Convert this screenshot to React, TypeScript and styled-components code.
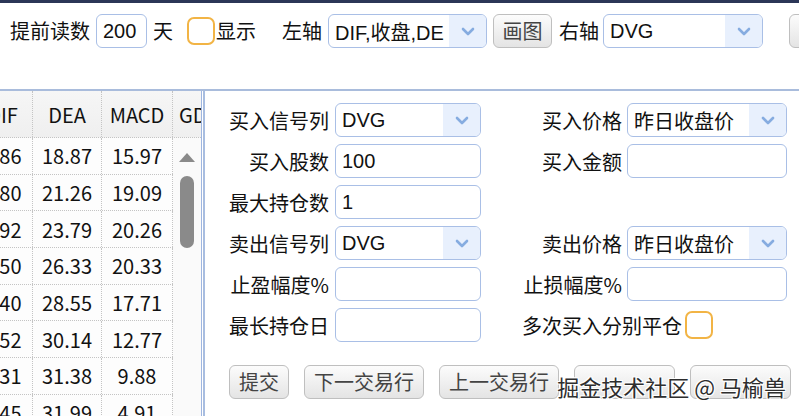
import React from 'react';
import styled, { createGlobalStyle } from 'styled-components';

const Global = createGlobalStyle`
  html, body { margin: 0; padding: 0; background: #fff; }
  body {
    font-family: "Liberation Sans", "Noto Sans CJK SC", sans-serif;
    font-size: 20px;
    color: #111;
    overflow: hidden;
  }
  * { box-sizing: border-box; }
`;

const Page = styled.div`
  position: relative;
  width: 799px;
  height: 416px;
  overflow: hidden;
  display: flex;
  flex-direction: column;
  border-top: 3px solid #2b3657;
  background: #fff;
`;

const Toolbar = styled.div`
  flex-shrink: 0;
  height: 88px;
  padding: 11px 0 0 10px;
  border-bottom: 2px solid #a9bcdc;
  overflow: hidden;
`;

const ToolRow = styled.div`
  height: 34px;
  display: flex;
  align-items: center;
  white-space: nowrap;
`;

const Text = styled.span<{ $ml?: number }>`
  display: flex;
  align-items: center;
  height: 34px;
  margin-left: ${(p) => p.$ml ?? 0}px;
  font-family: "Noto Sans CJK SC", sans-serif;
  font-size: 20px;
  line-height: 1;
  flex-shrink: 0;
`;

const TextInput = styled.div<{ $w?: number; $ml?: number }>`
  flex-shrink: 0;
  width: ${(p) => (p.$w ? `${p.$w}px` : '100%')};
  margin-left: ${(p) => p.$ml ?? 0}px;
  height: 34px;
  border: 1px solid #a9bfe6;
  border-radius: 6px;
  background: #fff;
  padding: 0 6px;
  display: flex;
  align-items: center;
  font-family: "Liberation Sans", "Noto Sans CJK SC", sans-serif;
  font-size: 20px;
  color: #111;
  overflow: hidden;
  white-space: nowrap;
`;

const SelectBox = styled.div<{ $w?: number; $ml?: number }>`
  flex-shrink: 0;
  width: ${(p) => (p.$w ? `${p.$w}px` : '100%')};
  margin-left: ${(p) => p.$ml ?? 0}px;
  height: 34px;
  border: 1px solid #a9bfe6;
  border-radius: 6px;
  background: #fff;
  display: flex;
  overflow: hidden;
`;

const SelectValue = styled.div`
  flex: 1;
  min-width: 0;
  padding: 0 6px;
  display: flex;
  align-items: center;
  font-family: "Liberation Sans", "Noto Sans CJK SC", sans-serif;
  font-size: 20px;
  color: #111;
  overflow: hidden;
  white-space: nowrap;
`;

const SelectArrow = styled.div`
  width: 37px;
  flex-shrink: 0;
  background: #e8f0fd;
  display: flex;
  align-items: center;
  justify-content: center;
`;

const Check = styled.div<{ $ml?: number }>`
  flex-shrink: 0;
  width: 28px;
  height: 28px;
  margin-left: ${(p) => p.$ml ?? 0}px;
  border: 2px solid #f2b445;
  border-radius: 7px;
  background: #fff;
`;

const Button = styled.button<{ $w?: number; $ml?: number }>`
  flex-shrink: 0;
  height: 34px;
  ${(p) => (p.$w ? `width: ${p.$w}px;` : '')}
  margin: 0 0 0 ${(p) => p.$ml ?? 0}px;
  padding: 0 9px;
  border: 1px solid #bfbfbf;
  border-radius: 6px;
  background: linear-gradient(#fcfcfc, #e4e4e4);
  color: #444;
  font-family: "Noto Sans CJK SC", sans-serif;
  font-size: 20px;
  line-height: 1;
  display: flex;
  align-items: center;
  justify-content: center;
  white-space: nowrap;
`;

const Main = styled.div`
  flex: 1;
  min-height: 0;
  display: flex;
`;

const LeftPanel = styled.div`
  width: 202px;
  flex-shrink: 0;
  margin-right: 1px;
  border-right: 1px solid #9fb6e0;
  display: flex;
  flex-direction: column;
  overflow: hidden;
  background: #fdfdfd;
  font-family: "Noto Sans CJK SC", sans-serif;
  font-size: 20px;
`;

const HeaderRow = styled.div`
  height: 47px;
  flex-shrink: 0;
  display: flex;
  background: linear-gradient(#f6f6f6, #efefef);
  border-bottom: 1px dotted #c4c4c4;
  margin-left: -39px;
`;

const Cell = styled.div<{ $w: number; $start?: boolean; $pl?: number }>`
  width: ${(p) => p.$w}px;
  flex-shrink: 0;
  height: 100%;
  display: flex;
  align-items: center;
  justify-content: ${(p) => (p.$start ? 'flex-start' : 'center')};
  padding-left: ${(p) => p.$pl ?? 0}px;
  border-right: 1px dotted #c4c4c4;
  white-space: nowrap;
  overflow: hidden;
  color: #111;
`;

const TableBody = styled.div`
  flex: 1;
  min-height: 0;
  display: flex;
`;

const RowsArea = styled.div`
  width: 173px;
  flex-shrink: 0;
  overflow: hidden;
`;

const DataRow = styled.div`
  height: 36.7px;
  display: flex;
  margin-left: -39px;
  border-bottom: 1px dotted #c4c4c4;
`;

const ScrollTrack = styled.div`
  flex: 1;
  display: flex;
  flex-direction: column;
  align-items: center;
  padding-top: 15px;
  background: #fafafa;
`;

const ScrollUp = styled.div`
  width: 0;
  height: 0;
  border-left: 8px solid transparent;
  border-right: 8px solid transparent;
  border-bottom: 9px solid #8a8a8a;
`;

const ScrollThumb = styled.div`
  margin-top: 14px;
  width: 14px;
  height: 72px;
  border-radius: 7px;
  background: #8a8a8a;
`;

const RightPanel = styled.div`
  flex: 1;
  min-width: 0;
  border-left: 2px solid #a8bde0;
  background: #fff;
  padding: 12px 0 0 24px;
`;

const FormGrid = styled.div`
  display: grid;
  grid-template-columns: 106px 146px 146px 160px;
  grid-auto-rows: 34px;
  row-gap: 7px;
`;

const FormLabel = styled.div<{ $pr?: number }>`
  display: flex;
  align-items: center;
  justify-content: flex-end;
  padding-right: ${(p) => p.$pr ?? 6}px;
  font-family: "Noto Sans CJK SC", sans-serif;
  font-size: 20px;
  color: #111;
  white-space: nowrap;
`;

const Empty = styled.div``;

const CheckCell = styled.div`
  grid-column: 3 / 5;
  display: flex;
  align-items: center;
  padding-left: 41px;
  gap: 3px;
  font-family: "Noto Sans CJK SC", sans-serif;
  font-size: 20px;
  white-space: nowrap;
`;

const ButtonRow = styled.div`
  display: flex;
  gap: 15px;
  margin-top: 23px;
`;

const Watermark = styled.div`
  position: absolute;
  right: 13px;
  top: 369px;
  font-family: "Noto Sans CJK SC", sans-serif;
  font-size: 22px;
  line-height: 28px;
  color: #2e2e2e;
  white-space: nowrap;
  text-shadow: 1px 1px 0 #fff, -1px -1px 0 #fff, 1px -1px 0 #fff, -1px 1px 0 #fff;
  pointer-events: none;
`;

const Chevron = () => (
  <svg width="14" height="9" viewBox="0 0 14 9">
    <path d="M2 2 L7 7 L12 2" fill="none" stroke="#86ace0" strokeWidth="2.6" strokeLinecap="round" strokeLinejoin="round" />
  </svg>
);

const Select = ({ value, w, ml }: { value: string; w?: number; ml?: number }) => (
  <SelectBox $w={w} $ml={ml}>
    <SelectValue>{value}</SelectValue>
    <SelectArrow>
      <Chevron />
    </SelectArrow>
  </SelectBox>
);

const rows = [
  ['26.86', '18.87', '15.97'],
  ['30.80', '21.26', '19.09'],
  ['33.92', '23.79', '20.26'],
  ['36.50', '26.33', '20.33'],
  ['37.40', '28.55', '17.71'],
  ['36.52', '30.14', '12.77'],
  ['36.31', '31.38', '9.88'],
  ['34.45', '31.99', '4.91'],
];

const COLS = [72, 69, 71];

export default function App() {
  return (
    <>
      <Global />
      <Page>
        <Toolbar>
          <ToolRow>
            <Text>提前读数</Text>
            <TextInput $w={51} $ml={6}>200</TextInput>
            <Text $ml={6}>天</Text>
            <Check $ml={14} />
            <Text $ml={1}>显示</Text>
            <Text $ml={26}>左轴</Text>
            <Select value="DIF,收盘,DE" w={159} ml={6} />
            <Button $w={59} $ml={6}>画图</Button>
            <Text $ml={7}>右轴</Text>
            <Select value="DVG" w={160} ml={4} />
            <Button $ml={26}>清空</Button>
          </ToolRow>
        </Toolbar>
        <Main>
          <LeftPanel>
            <HeaderRow>
              <Cell $w={COLS[0]} $pl={12}>DIF</Cell>
              <Cell $w={COLS[1]}>DEA</Cell>
              <Cell $w={COLS[2]}>MACD</Cell>
              <Cell $w={60} $start $pl={6}>GD</Cell>
            </HeaderRow>
            <TableBody>
              <RowsArea>
                {rows.map((r, i) => (
                  <DataRow key={i}>
                    {r.map((v, j) => (
                      <Cell key={j} $w={COLS[j]}>{v}</Cell>
                    ))}
                  </DataRow>
                ))}
              </RowsArea>
              <ScrollTrack>
                <ScrollUp />
                <ScrollThumb />
              </ScrollTrack>
            </TableBody>
          </LeftPanel>
          <RightPanel>
            <FormGrid>
              <FormLabel>买入信号列</FormLabel>
              <Select value="DVG" />
              <FormLabel $pr={5}>买入价格</FormLabel>
              <Select value="昨日收盘价" />

              <FormLabel>买入股数</FormLabel>
              <TextInput>100</TextInput>
              <FormLabel $pr={5}>买入金额</FormLabel>
              <TextInput />

              <FormLabel>最大持仓数</FormLabel>
              <TextInput>1</TextInput>
              <Empty />
              <Empty />

              <FormLabel>卖出信号列</FormLabel>
              <Select value="DVG" />
              <FormLabel $pr={5}>卖出价格</FormLabel>
              <Select value="昨日收盘价" />

              <FormLabel>止盈幅度%</FormLabel>
              <TextInput />
              <FormLabel $pr={5}>止损幅度%</FormLabel>
              <TextInput />

              <FormLabel>最长持仓日</FormLabel>
              <TextInput />
              <CheckCell>
                多次买入分别平仓
                <Check />
              </CheckCell>
            </FormGrid>
            <ButtonRow>
              <Button>提交</Button>
              <Button>下一交易行</Button>
              <Button>上一交易行</Button>
              <Button $w={101} />
              <Button $w={101} />
            </ButtonRow>
          </RightPanel>
        </Main>
        <Watermark>掘金技术社区 @ 马榆兽</Watermark>
      </Page>
    </>
  );
}
